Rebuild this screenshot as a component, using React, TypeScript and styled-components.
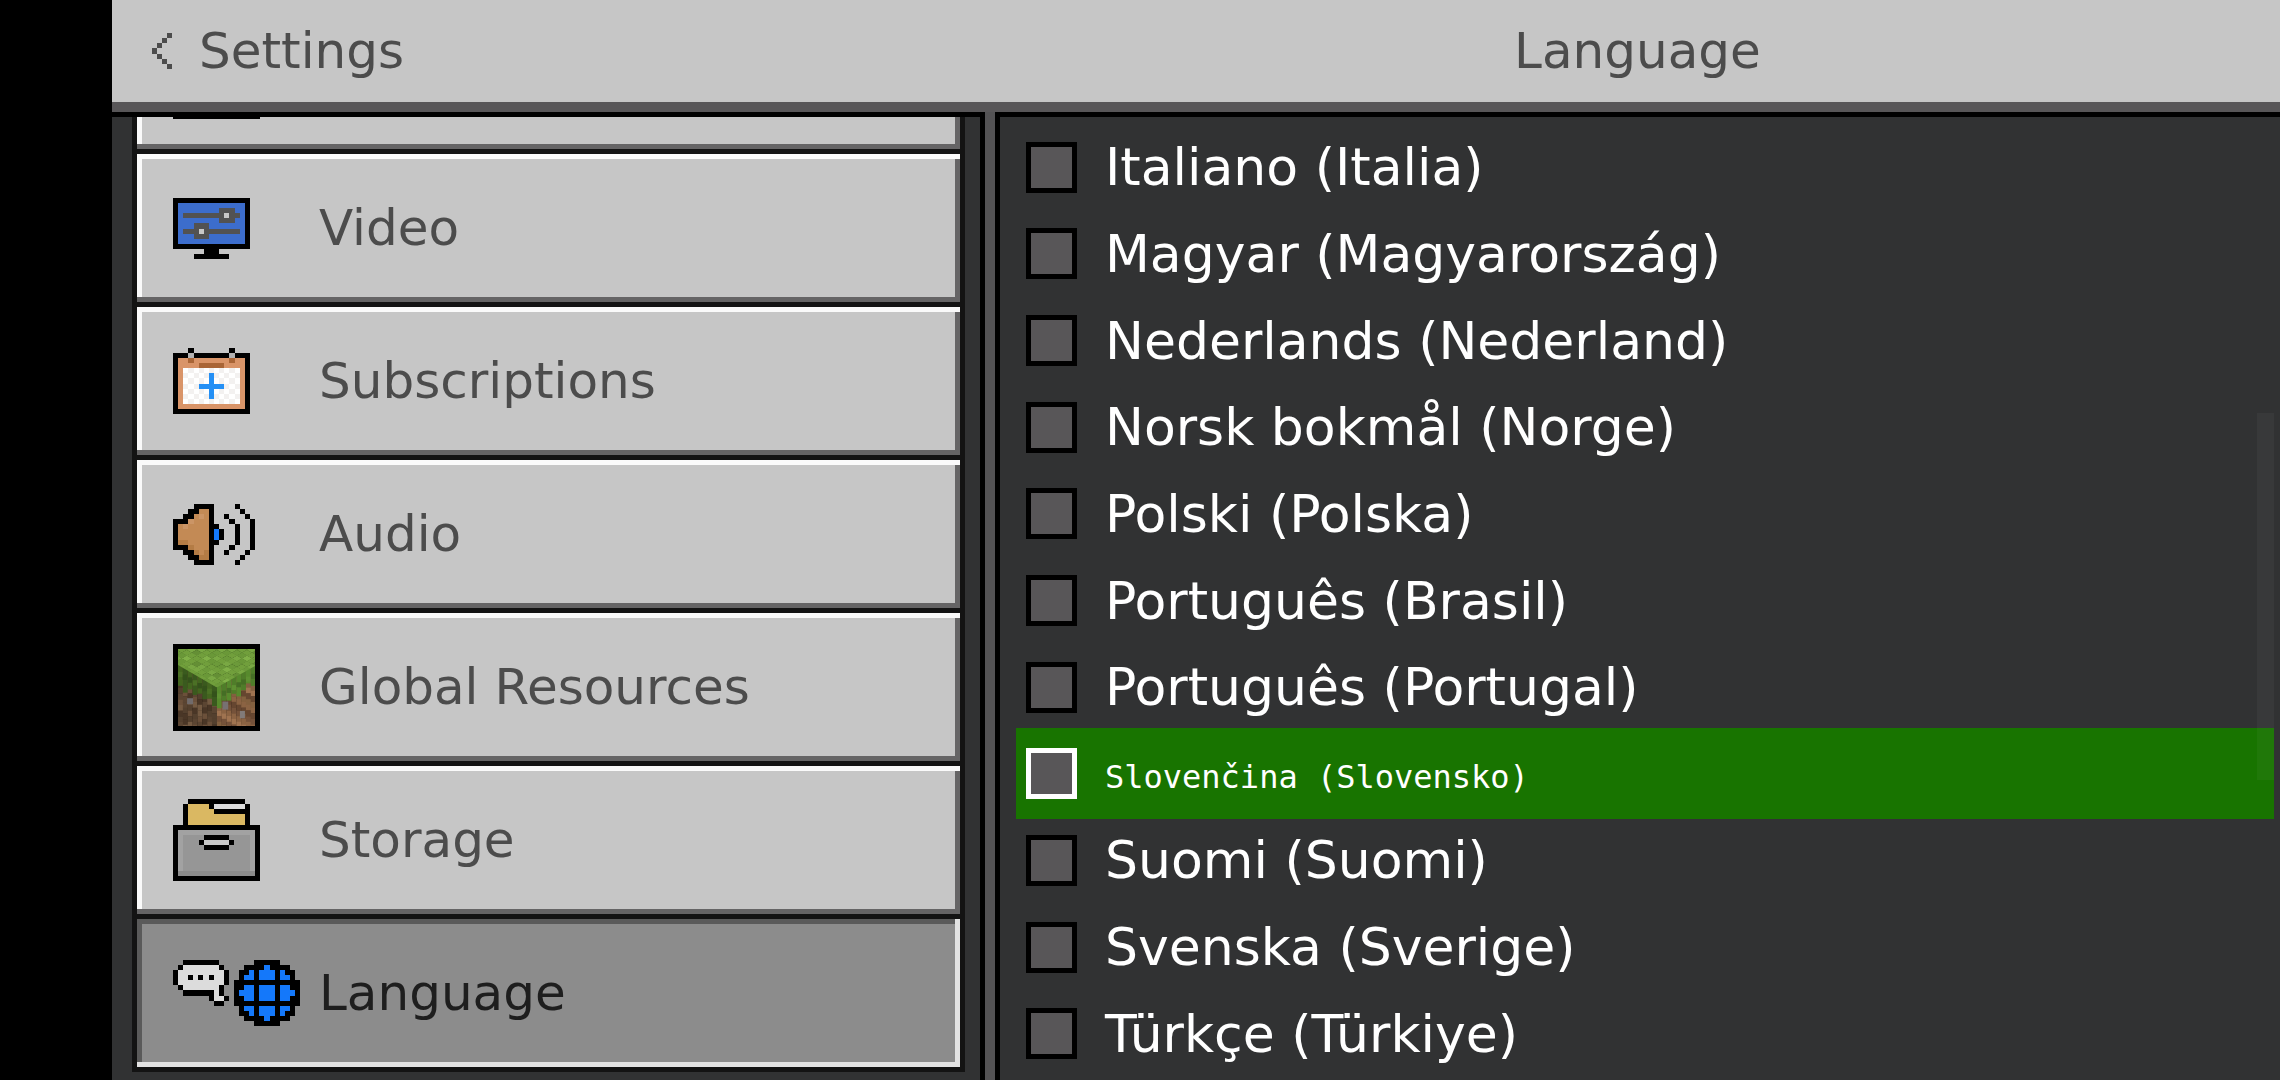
import React from 'react';
import styled, { createGlobalStyle } from 'styled-components';

const GlobalStyle = createGlobalStyle`
  * { box-sizing: border-box; }
  body {
    margin: 0;
    background: #000;
    font-family: "DejaVu Sans", sans-serif;
  }
`;

/* ---------- pixel art ---------- */

const palette: Record<string, string> = {
  k: '#000000',
  b: '#3c6dcc',
  s: '#525252',
  c: '#4c4c4c',
  h: '#c8c8c8',
  o: '#d99468',
  d: '#a96536',
  g: '#b2b2b2',
  w: '#ffffff',
  v: '#f3f1f0',
  p: '#2590f5',
  n: '#c38a55',
  m: '#cb9566',
  a: '#b47c45',
  u: '#1478fa',
  y: '#dab862',
  l: '#dcdcdc',
  1: '#a2a2a2',
  2: '#969696',
  3: '#8b8b8b',
};

const chevronArt = ['...c', '..c.', '.c..', 'c...', '.c..', '..c.', '...c'];

const profileArt = Array.from({ length: 17 }, (_, row) =>
  row === 0 || row === 16 ? 'k'.repeat(17) : 'k' + 'o'.repeat(15) + 'k',
);

const videoArt = [
  'kkkkkkkkkkkkkkk',
  'kbbbbbbbbbbbbbk',
  'kbbbbbbbbsssbbk',
  'kbsssssssshssbk',
  'kbbbbbbbbsssbbk',
  'kbbbsssbbbbbbbk',
  'kbssshsssssssbk',
  'kbbbsssbbbbbbbk',
  'kbbbbbbbbbbbbbk',
  'kkkkkkkkkkkkkkk',
  '......kkk......',
  '....kkkkkkk....',
];

const subscriptionArt = [
  '...k.......k...',
  'kkkgkkkkkkkgkkk',
  'koodooooooodook',
  'koooodddddooook',
  'kowvwvwvwvwvwok',
  'kovwvwvpvwvwvok',
  'kowvwvwpwvwvwok',
  'kovwvpppppvwvok',
  'kowvwvwpwvwvwok',
  'kovwvwvpvwvwvok',
  'kowvwvwvwvwvwok',
  'koooooooooooook',
  'kkkkkkkkkkkkkkk',
];

const audioArt = [
  '....kkkk....k...',
  '...kknnk.....k..',
  '..kknmnk..k...k.',
  'kkkmnnnk...k...k',
  'knmnnnnkk...k..k',
  'knnnnnnkuk..k..k',
  'knnnnnnkuk..k..k',
  'kaannnnkk...k..k',
  'kkkannnk...k...k',
  '..kkanak..k...k.',
  '...kkaak.....k..',
  '....kkkk....k...',
];

const storageArt = [
  '...kkkkkkkkkkk...',
  '..kyyyykllllllk..',
  '..kyyyyykkkkkkk..',
  '..kyyyyyyyyyyyk..',
  '..kyyyyyyyyyyyk..',
  'kkkkkkkkkkkkkkkkk',
  'k111111111111111k',
  'k12222kkkkk22221k',
  'k1222khhhhhk2221k',
  'k12222kkkkk22221k',
  'k122222222222221k',
  'k122222222222221k',
  'k122222222222221k',
  'k122222222222221k',
  'k333333333333333k',
  'kkkkkkkkkkkkkkkkk',
];

const languageArt = [
  '..kkkkkkk.......kkkkk....',
  '.klllllllk....kkkkukkkk..',
  'klllllllllk..kkukuuukukk.',
  'kllklklkllk..kuukuuukuuk.',
  'klllllllllk.kkkkkkkkkkkkk',
  '.klllllllk..kkuukuuukuukk',
  '..kkkkkklk..kuuukuuukuuuk',
  '.......kllk.kkuukuuukuukk',
  '........kk..kkkkkkkkkkkkk',
  '.............kuukuuukuuk.',
  '.............kkukuuukukk.',
  '..............kkkkukkkk..',
  '................kkkkk....',
];

function PixelArt({ rows }: { rows: string[] }) {
  const cols = rows[0].length;
  return (
    <svg
      width={Math.round(cols * 5.1)}
      height={Math.round(rows.length * 5.1)}
      viewBox={`0 0 ${cols} ${rows.length}`}
      preserveAspectRatio="none"
      shapeRendering="crispEdges"
      aria-hidden="true"
    >
      {rows.flatMap((row, y) =>
        [...row].map((c, x) =>
          palette[c] ? <rect key={`${x}-${y}`} x={x} y={y} width="1" height="1" fill={palette[c]} /> : null,
        ),
      )}
    </svg>
  );
}

const grassTones = ['#6c9a3a', '#79a843', '#648f35', '#719f3c', '#80b048', '#6a9838'];
const leftDirt = ['#5b4532', '#4a3626', '#6b503a', '#54402e', '#745a42'];
const rightDirt = ['#8b6343', '#75523a', '#9f7350', '#83603f', '#664630'];

/* An isometric grass block: a tiled top and two side faces whose columns end in ragged turf. */
function GrassBlock() {
  const cells: React.ReactNode[] = [];
  const leftTurf = [62, 74, 56, 64, 52, 60, 50, 64];
  const rightTurf = [62, 48, 56, 44, 60, 50, 38, 54];
  for (let c = 0; c < 8; c++) {
    const x = 15 + c * 14.5;
    const top = 63 + c * 8.4;
    for (let r = 0; r < 12; r++) {
      cells.push(
        <rect key={`l${c}-${r}`} x={x} y={top + r * 17} width="15" height="18"
          fill={leftDirt[(c * 3 + r * 2 + ((c * r) % 3)) % 5]} />,
      );
    }
    cells.push(<rect key={`lt${c}`} x={x} y={top - 8} width="15" height={leftTurf[c] + 8} fill={c % 2 ? '#3a5a1e' : '#43661f'} />);
    cells.push(<rect key={`lu${c}`} x={x} y={top + 20} width="15" height="16" fill={c % 3 ? '#34521b' : '#4b7025'} />);
    const rx = 131 + c * 14.5;
    const rtop = 130 - c * 8.4;
    for (let r = 0; r < 12; r++) {
      cells.push(
        <rect key={`r${c}-${r}`} x={rx} y={rtop + r * 17} width="15" height="18"
          fill={rightDirt[(c * 2 + r * 3 + ((c + r) % 2)) % 5]} />,
      );
    }
    cells.push(<rect key={`rt${c}`} x={rx} y={rtop - 12} width="15" height={rightTurf[c] + 12} fill={c % 2 ? '#4f7d29' : '#578a2d'} />);
    cells.push(<rect key={`ru${c}`} x={rx} y={rtop + 18} width="15" height="15" fill={c % 3 ? '#456e25' : '#5e9032'} />);
  }
  const tiles: React.ReactNode[] = [];
  for (let i = -8; i < 9; i++) {
    for (let j = -8; j < 9; j++) {
      const cx = 131 + (i - j) * 15;
      const cy = 60 + (i + j) * 8.5;
      tiles.push(
        <polygon key={`${i}_${j}`}
          points={`${cx},${cy - 9} ${cx + 16},${cy} ${cx},${cy + 9} ${cx - 16},${cy}`}
          fill={grassTones[Math.abs(i * 5 + j * 3 + i * j) % 6]} />,
      );
    }
  }
  return (
    <svg width="87" height="87" viewBox="0 0 260 260" aria-hidden="true">
      <defs>
        <clipPath id="block-frame"><rect x="15" y="15" width="230" height="230" /></clipPath>
        <clipPath id="block-top"><polygon points="15,15 245,15 245,66 131,130 15,63" /></clipPath>
      </defs>
      <rect width="260" height="260" fill="#000" />
      <g clipPath="url(#block-frame)">
        {cells}
        <rect x="42" y="162" width="18" height="18" fill="#716b6b" />
        <rect x="148" y="172" width="17" height="24" fill="#777172" />
        <rect x="200" y="200" width="15" height="22" fill="#827b79" />
        <g clipPath="url(#block-top)">{tiles}</g>
      </g>
    </svg>
  );
}

/* ---------- layout ---------- */

const Screen = styled.div`
  height: 100vh;
  padding-left: 112px;
  display: flex;
  flex-direction: column;
  background: #000;
`;

const Header = styled.header`
  flex: none;
  display: grid;
  grid-template-columns: 873fr 10px 1285fr;
  align-items: center;
  height: 112px;
  background: #c6c6c6;
  border-bottom: 10px solid #585658;
  color: #4c4c4c;
  font-size: 50px;
  line-height: 60px;
`;

const BackButton = styled.button`
  display: flex;
  align-items: center;
  gap: 27px;
  justify-self: start;
  margin: 0;
  padding: 0 0 0 40px;
  border: 0;
  background: none;
  color: inherit;
  font: inherit;
`;

const Title = styled.h1`
  grid-column: 3;
  margin: 0;
  font: inherit;
  text-align: center;
`;

const Body = styled.div`
  flex: 1;
  min-height: 0;
  display: grid;
  grid-template-columns: 873fr 1285fr;
  column-gap: 10px;
  grid-template-rows: minmax(0, 1fr);
  background: #535254;
`;

const Sidebar = styled.nav`
  display: flex;
  flex-direction: column;
  justify-content: flex-end;
  overflow: hidden;
  padding: 0 15px 8px 20px;
  border-top: 5px solid #000;
  border-right: 5px solid #000;
  background: #313233;
`;

const Menu = styled.ul`
  display: flex;
  flex-direction: column;
  gap: 5px;
  margin: 0;
  padding: 0 5px 5px;
  list-style: none;
  background: #131313;
`;

const MenuButton = styled.button<{ $active?: boolean }>`
  display: flex;
  align-items: center;
  width: 100%;
  height: 148px;
  margin: 0;
  padding: 0 36px;
  border: 0;
  text-align: left;
  font: inherit;
  font-size: 50px;
  line-height: 60px;
  color: ${(p) => (p.$active ? '#1e1e1e' : '#4c4c4c')};
  background: ${(p) => (p.$active ? '#8c8c8c' : '#c6c6c6')};
  box-shadow: ${(p) =>
    p.$active
      ? 'inset 0 -5px #e2e2e2, inset -5px 0 #e2e2e2, inset 0 5px #5a5a5a, inset 5px 0 #5a5a5a'
      : 'inset 0 5px #fafafa, inset -5px 0 #656465, inset 0 -5px #656465, inset 5px 0 #fafafa'};
`;

const IconSlot = styled.span`
  flex: none;
  display: flex;
  width: 146px;
`;

const Content = styled.main`
  position: relative;
  display: flex;
  border-top: 5px solid #000;
  border-left: 5px solid #000;
  background: #313233;
`;

const LanguageList = styled.fieldset`
  flex: 1;
  min-width: 0;
  display: flex;
  flex-direction: column;
  margin: 0;
  padding: 7px 6px 3px 16px;
  border: 0;
`;

const LanguageRow = styled.label<{ $highlighted?: boolean }>`
  flex: 1;
  display: flex;
  align-items: center;
  gap: 28px;
  margin: -2px 0;
  padding: 0 10px;
  color: #fff;
  background: ${(p) => (p.$highlighted ? '#187400' : 'transparent')};
  font-size: 52px;
  line-height: 60px;
  white-space: nowrap;
`;

const FallbackText = styled.span`
  font-family: "DejaVu Sans Mono", monospace;
  font-size: 32px;
`;

const Box = styled.input<{ $highlighted?: boolean }>`
  appearance: none;
  flex: none;
  width: 51px;
  height: 51px;
  margin: 0;
  border: 5px solid ${(p) => (p.$highlighted ? '#fff' : '#000')};
  border-radius: 0;
  background: #585658;
`;

const ScrollThumb = styled.div`
  position: absolute;
  top: 296px;
  right: 6px;
  width: 17px;
  height: 367px;
  background: rgba(255, 255, 255, 0.035);
`;

const menu: { label?: string; icon: React.ReactNode; active?: boolean }[] = [
  { icon: <PixelArt rows={profileArt} /> },
  { label: 'Video', icon: <PixelArt rows={videoArt} /> },
  { label: 'Subscriptions', icon: <PixelArt rows={subscriptionArt} /> },
  { label: 'Audio', icon: <PixelArt rows={audioArt} /> },
  { label: 'Global Resources', icon: <GrassBlock /> },
  { label: 'Storage', icon: <PixelArt rows={storageArt} /> },
  { label: 'Language', icon: <PixelArt rows={languageArt} />, active: true },
];

const languages: { name: string; highlighted?: boolean }[] = [
  { name: 'Italiano (Italia)' },
  { name: 'Magyar (Magyarország)' },
  { name: 'Nederlands (Nederland)' },
  { name: 'Norsk bokmål (Norge)' },
  { name: 'Polski (Polska)' },
  { name: 'Português (Brasil)' },
  { name: 'Português (Portugal)' },
  { name: 'Slovenčina (Slovensko)', highlighted: true },
  { name: 'Suomi (Suomi)' },
  { name: 'Svenska (Sverige)' },
  { name: 'Türkçe (Türkiye)' },
];

export default function App() {
  return (
    <Screen>
      <GlobalStyle />
      <Header>
        <BackButton type="button">
          <PixelArt rows={chevronArt} />
          Settings
        </BackButton>
        <Title>Language</Title>
      </Header>
      <Body>
        <Sidebar>
          <Menu>
            {menu.map((item, i) => (
              <li key={i}>
                <MenuButton type="button" $active={item.active}>
                  <IconSlot>{item.icon}</IconSlot>
                  {item.label}
                </MenuButton>
              </li>
            ))}
          </Menu>
        </Sidebar>
        <Content>
          <LanguageList>
            {languages.map(({ name, highlighted }) => (
              <LanguageRow key={name} $highlighted={highlighted}>
                <Box type="radio" name="language" $highlighted={highlighted} />
                <span>{highlighted ? <FallbackText>{name}</FallbackText> : name}</span>
              </LanguageRow>
            ))}
          </LanguageList>
          <ScrollThumb />
        </Content>
      </Body>
    </Screen>
  );
}
